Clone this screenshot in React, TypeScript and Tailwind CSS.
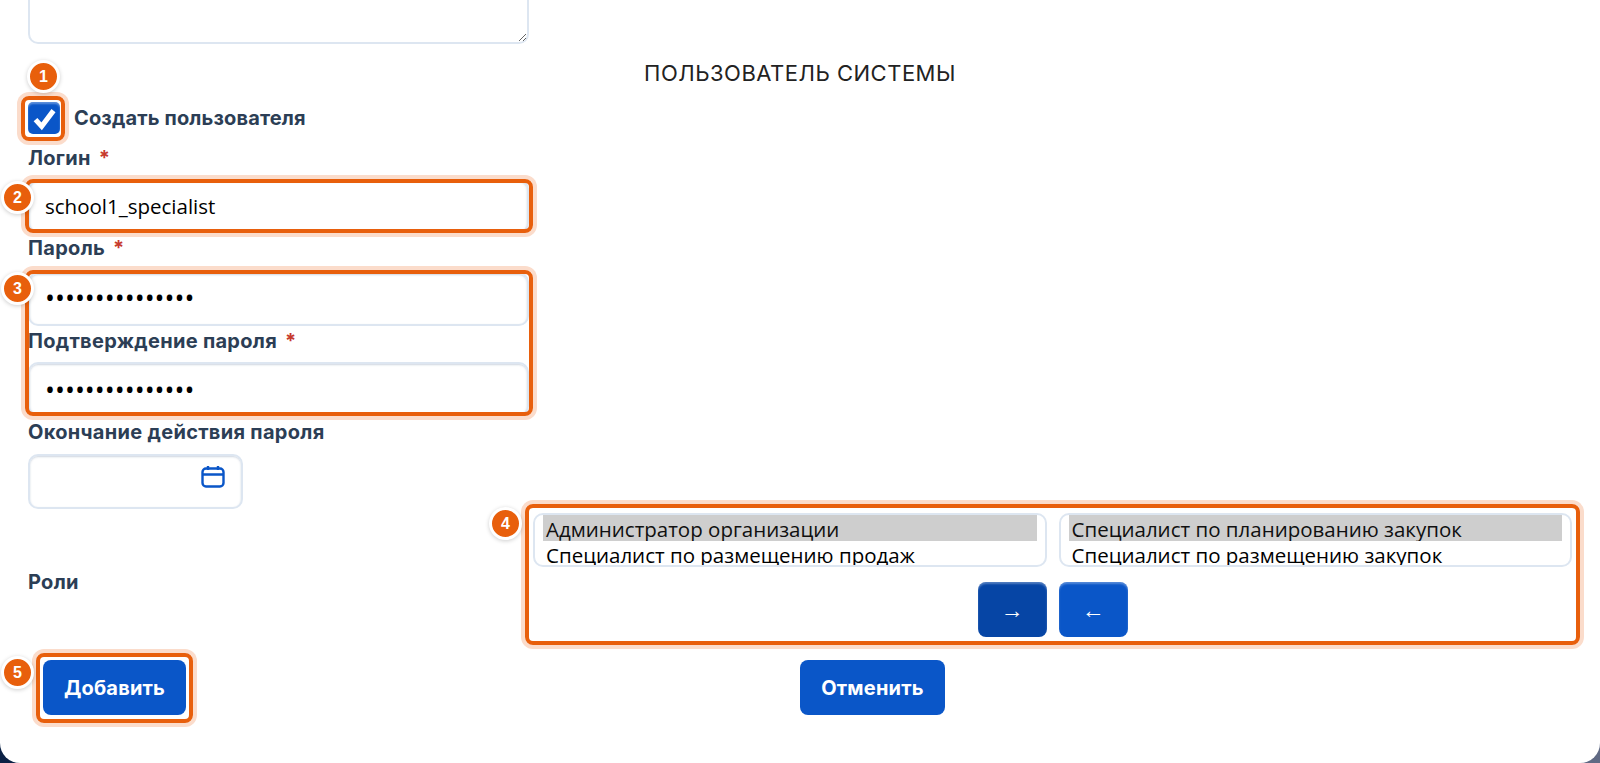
import type { ReactNode } from 'react'

const labelBase = "block font-['Inter',sans-serif] text-[20px] leading-[24px] font-bold text-[#2c3e55]"
const labelCls = `${labelBase} tracking-[0.3px]`
const inputCls =
  "block h-[54px] w-full rounded-[10px] border-2 border-[#dde6f1] bg-white px-[15px] font-['Open_Sans',sans-serif] text-[20.5px] text-black shadow-[inset_0_1px_2px_rgba(60,90,130,0.25)] outline-none"
const passwordCls =
  "block h-[54px] w-full rounded-[10px] border-2 border-[#dde6f1] bg-white px-[15px] font-['Open_Sans',sans-serif] text-[26.5px] text-black shadow-[inset_0_1px_2px_rgba(60,90,130,0.25)] outline-none"
const selectCls =
  "block h-[54px] w-full overflow-hidden rounded-[10px] border-2 border-[#dde6f1] bg-white px-[8px] py-0 font-['Open_Sans',sans-serif] text-[20.5px] text-black outline-none"
const optionCls = 'h-[26px] overflow-hidden pb-0 pl-[3px]'
const primaryBtn =
  "h-[55px] rounded-[8px] bg-[#0a56c8] font-['Inter',sans-serif] text-[20px] font-bold tracking-[0.2px] text-white"

// рамка-выделение поверх содержимого с номером шага
function Marker({ n, boxCls, badgeCls }: { n: number; boxCls: string; badgeCls: string }) {
  return (
    <>
      <div
        className={`pointer-events-none absolute rounded-[8px] border-4 border-[#e85f0c] shadow-[0_0_0_4px_#fbdccb] ${boxCls}`}
      />
      <div
        className={`absolute flex h-[33px] w-[33px] items-center justify-center rounded-full border-[3px] border-white bg-[#e85f0c] font-['Liberation_Sans',sans-serif] text-[16px] font-bold text-white shadow-[0_1px_4px_rgba(0,0,0,0.2)] ${badgeCls}`}
      >
        {n}
      </div>
    </>
  )
}

function Label({ children, required }: { children: ReactNode; required?: boolean }) {
  return (
    <label className={labelCls}>
      {children}
      {required && <span className="ml-2 text-[#c73a2e]">*</span>}
    </label>
  )
}

export default function App() {
  return (
    <div className="h-[763px] w-full overflow-hidden bg-gradient-to-r from-[#0b2145] to-[#606a84]">
      <div className="relative h-full overflow-hidden rounded-b-[20px] bg-white px-[28px]">
        <textarea
          readOnly
          className="-mt-[40px] block h-[84px] w-[501px] rounded-[10px] border-2 border-[#dde6f1] bg-white outline-none"
        />

        <h2 className="mt-[17px] text-center font-['Inter',sans-serif] text-[22px] leading-[24px] tracking-[0.5px] text-[#222]">
          ПОЛЬЗОВАТЕЛЬ СИСТЕМЫ
        </h2>

        <div className="relative mt-[11px] flex h-[44px] w-[501px] items-center">
          <div className="flex h-[32px] w-[32px] items-center justify-center rounded-[5px] bg-[#0a56c8] shadow-[inset_0_2px_2px_rgba(255,255,255,0.35)]">
            <svg viewBox="0 0 24 24" className="h-[27px] w-[27px]" fill="none" stroke="white" strokeWidth="4.5">
              <path d="M4 13l5.5 6L20 5" />
            </svg>
          </div>
          <span className={`${labelBase} ml-[14px] tracking-[0.15px]`}>Создать пользователя</span>
          <Marker n={1} boxCls="-left-[7px] top-0 h-[45px] w-[44px]" badgeCls="-left-[1px] -top-[36px]" />
        </div>

        <div className="mt-[6px]">
          <Label required>Логин</Label>
        </div>
        <div className="relative mt-[9px] w-[501px]">
          <input readOnly value="school1_specialist" className={inputCls} />
          <Marker n={2} boxCls="-left-[3px] top-0 h-[54px] w-[508px]" badgeCls="-left-[27px] top-[2px]" />
        </div>

        <div className="mt-[3px]">
          <Label required>Пароль</Label>
        </div>
        <div className="relative mt-[12px] w-[501px]">
          <input readOnly type="password" value="123456789012345" className={`${passwordCls} pb-[3px]`} />
          <div className="mt-[3px]">
            <Label required>Подтверждение пароля</Label>
          </div>
          <input readOnly type="password" value="123456789012345" className={`${passwordCls} mt-[9px] pt-[1px]`} />
          <Marker n={3} boxCls="-left-[3px] -top-[2px] h-[146px] w-[508px]" badgeCls="-left-[27px] top-0" />
        </div>

        <div className="mt-[4px]">
          <Label>Окончание действия пароля</Label>
        </div>
        <div className="relative mt-[10px] h-[55px] w-[215px] rounded-[10px] border-2 border-[#dde6f1] shadow-[inset_0_1px_2px_rgba(60,90,130,0.25)]">
          <svg
            viewBox="0 0 24 24"
            className="absolute right-[16px] top-[9px] h-[24px] w-[24px]"
            fill="none"
            stroke="#0a56c8"
            strokeWidth="2.4"
          >
            <rect x="1.5" y="3.5" width="21" height="18" rx="3.5" />
            <path d="M1.5 9.5h21M7 1v4M17 1v4" />
          </svg>
        </div>

        <div className="flex h-[145px] items-center justify-between">
          <Label>Роли</Label>
          <div className="relative mt-[4px] w-[1039px] self-start">
            <div className="grid grid-cols-2 gap-[12px]">
              <select multiple defaultValue={['admin']} className={selectCls}>
                <option value="admin" className={optionCls}>Администратор организации</option>
                <option value="sales" className={optionCls}>Специалист по размещению продаж</option>
              </select>
              <select multiple defaultValue={['plan']} className={selectCls}>
                <option value="plan" className={optionCls}>Специалист по планированию закупок</option>
                <option value="place" className={optionCls}>Специалист по размещению закупок</option>
              </select>
            </div>
            <div className="mt-[15px] flex justify-center gap-[12px]">
              <button className="h-[55px] w-[69px] rounded-[8px] bg-[#0645a5] text-[23px] text-white shadow-[inset_0_2px_2px_rgba(255,255,255,0.3)]">
                →
              </button>
              <button className="h-[55px] w-[69px] rounded-[8px] bg-[#0a56c8] text-[23px] text-white shadow-[inset_0_2px_2px_rgba(255,255,255,0.3)]">
                ←
              </button>
            </div>
            <Marker n={4} boxCls="-left-[8px] -top-[9px] h-[141px] w-[1055px]" badgeCls="-left-[44px] -top-[6px]" />
          </div>
        </div>

        <div className="relative mt-[6px] flex h-[55px] pl-[15px]">
          <button className={`${primaryBtn} w-[143px]`}>Добавить</button>
          <button className={`${primaryBtn} ml-[614px] w-[145px]`}>Отменить</button>
          <Marker n={5} boxCls="left-[8px] -top-[7px] h-[70px] w-[157px]" badgeCls="-left-[27px] -top-[4px]" />
        </div>
      </div>
    </div>
  )
}
